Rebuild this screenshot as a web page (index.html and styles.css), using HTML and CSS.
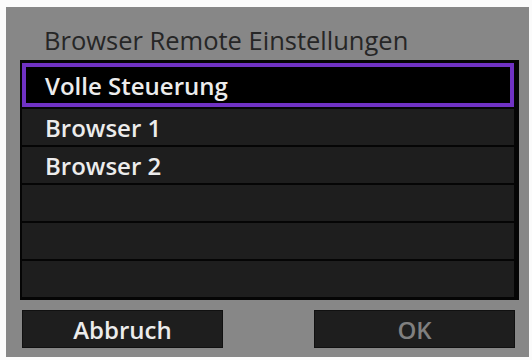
FILE: index.html
```html
<!DOCTYPE html>
<html>
<head>
    <title>Browser Remote Einstellungen</title>
    <link rel="stylesheet" href="styles.css">
</head>
<body>
    <div class="panel">
        <div class="title">Browser Remote Einstellungen</div>
        <div class="list">
            <div class="row selected">Volle Steuerung</div>
            <div class="row">Browser 1</div>
            <div class="row">Browser 2</div>
            <div class="row"></div>
            <div class="row"></div>
            <div class="row"></div>
        </div>
        <div class="buttons">
            <div class="btn">Abbruch</div>
            <div class="btn disabled">OK</div>
        </div>
    </div>
</body>
</html>
```

FILE: styles.css
```css
body { margin: 0; background: #fbfbfb; font-family: "Open Sans", "Noto Sans", sans-serif; }
.panel { margin: 7px 3px 3px 6px; height: 350px; background: #878787; box-sizing: border-box; padding: 0 10px 0 14px; display: flex; flex-direction: column; }
.title { height: 53px; box-sizing: border-box; padding: 18px 0 0 24px; font-size: 25.5px; font-weight: 500; line-height: 30px; color: #262626; }
.list { height: 240px; box-sizing: border-box; background: #050505; padding: 3px 5px 3px 2px; display: flex; flex-direction: column; gap: 2px; }
.row { flex: 1; background: #1e1e1e; color: #ececec; font-size: 24px; font-weight: 600; display: flex; align-items: center; padding-left: 23px; }
.row.selected { background: #000; border: 4px solid #7032c4; padding-left: 19px; }
.buttons { display: flex; justify-content: space-between; padding: 10px 4px 0 2px; }
.btn { width: 201px; height: 38px; box-sizing: border-box; background: #1e1e1e; border: 1px solid #111; color: #ececec; font-size: 24px; font-weight: 600; display: flex; align-items: center; justify-content: center; }
.btn.disabled { color: #808080; }
```
